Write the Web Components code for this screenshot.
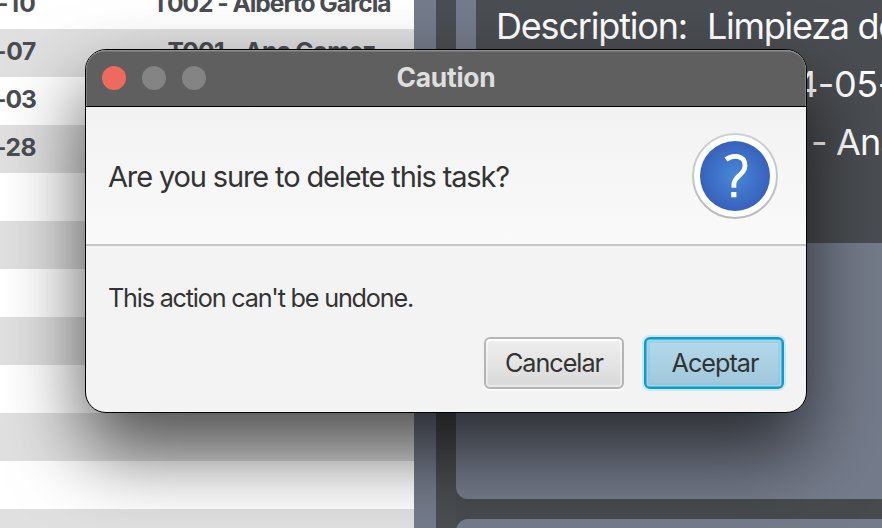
<!DOCTYPE html>
<html lang="en">
<head>
<meta charset="utf-8">
<title>Caution</title>
<style>
html,body{margin:0;width:882px;height:528px;overflow:hidden;background:#484b4e}
body{font-family:Inter,"Liberation Sans",sans-serif}
</style>
</head>
<body>
<task-app></task-app>
<script>
const define = (name, html, init) => customElements.define(name, class extends HTMLElement {
  constructor() {
    super();
    this.attachShadow({mode: 'open'}).innerHTML = html;
  }
  connectedCallback() { if (init) init(this, this.shadowRoot); }
});

// One line of text tracked to the width given in its "w" attribute.
define('fit-text', `<style>:host{display:inline-block;white-space:nowrap}span{display:inline-block}</style><span><slot></slot></span>`, (el, root) => {
  const want = parseFloat(el.getAttribute('w'));
  if (!want) return;
  const s = root.querySelector('span');
  const gap = (want - s.getBoundingClientRect().width) / el.textContent.length;
  s.style.letterSpacing = gap + 'px';
});

define('table-row', `<style>
:host{display:grid;grid-template-columns:130px 284px;height:48px;box-sizing:border-box;background:#fff;color:#4a4d52;font:700 24.6px/45px Inter,sans-serif}
:host([odd]){background:#e0e0e0}
.d{width:36px;display:flex;justify-content:flex-end}.n{text-align:center;margin-left:-1px}
</style><div class="d"><slot name="date"></slot></div><div class="n"><slot></slot></div>`);

define('task-table', `<style>:host{display:block;width:414px;height:528px;overflow:hidden}div{margin-top:-19px}</style>
<div>
<table-row><fit-text slot="date" w="39">-10</fit-text><fit-text w="238">T002 - Alberto Garcia</fit-text></table-row>
<table-row odd><fit-text slot="date" w="41">-07</fit-text><fit-text w="208">T001 - Ana Gomez</fit-text></table-row>
<table-row><fit-text slot="date" w="41">-03</fit-text></table-row>
<table-row odd><fit-text slot="date" w="41">-28</fit-text></table-row>
<table-row></table-row><table-row odd></table-row><table-row></table-row><table-row odd></table-row>
<table-row></table-row><table-row odd></table-row><table-row></table-row><table-row odd></table-row>
</div>`);

define('task-details', `<style>
:host{display:flex;flex-direction:column;gap:20px;width:426px;height:528px;overflow:hidden}
.card{background:#747b8a;border-radius:0 0 0 12px;height:499px;flex:none;padding-left:20px;box-sizing:border-box}
.info{background:#4a4d51;height:243px;color:#fff;font:400 36px/58px Inter,sans-serif;overflow:hidden;white-space:nowrap;box-sizing:border-box;padding-left:20px}
.line{display:flex;height:58px}.first{margin-top:-3px;gap:20px}.b{padding-left:299px}.c{padding-left:315px}
.next{background:#747b8a;border-radius:12px 0 0 0;height:60px;flex:none}
</style>
<div class="card"><div class="info">
<div class="line first"><fit-text w="191">Description:</fit-text><fit-text w="191">Limpieza de</fit-text></div>
<div class="line b"><fit-text w="99">4-05-</fit-text></div>
<div class="line c"><fit-text w="89">- Ana</fit-text></div>
</div></div><div class="next"></div>`);

define('question-icon', `<style>:host{display:block;width:86px;height:86px}svg{display:block}</style>
<svg width="86" height="86" viewBox="0 0 86 86">
<defs><radialGradient id="g"><stop offset="0" stop-color="#4788d8"/><stop offset="1" stop-color="#3861bc"/></radialGradient>
<linearGradient id="r" x2="0" y2="1"><stop offset="0" stop-color="#d0d0d0"/><stop offset="1" stop-color="#bababa"/></linearGradient></defs>
<circle cx="43" cy="43" r="42" fill="#fff" stroke="url(#r)" stroke-width="2"/>
<circle cx="43" cy="43" r="35" fill="url(#g)"/>
<path d="M34 26.5C40.5 21.5 53 22 53 32.4C53 42.2 41.9 42.6 41.9 51.5V54.8" fill="none" stroke="#fff" stroke-width="4.8"/>
<path d="M39.2 59h5.2v5.2h-5.2z" fill="#fff"/>
</svg>`);

define('dialog-button', `<style>
:host{display:flex;align-items:center;justify-content:center;box-sizing:border-box;width:140px;height:52px;border:2px solid #b5b5b5;border-radius:6px;background:linear-gradient(#efefef,#d9d9d9) padding-box;box-shadow:inset 0 0 0 2px rgba(255,255,255,.4),inset 0 2px #fff,0 2px #fcfcfc;color:#333;font:400 25.2px/48px Inter,sans-serif}
:host([primary]){padding-left:2px;border-color:#039ed3;background:linear-gradient(#b4dbec,#9fc6da) padding-box;box-shadow:0 0 0 2px #d1e6ee,inset 0 0 0 .5px #039ed3,inset 0 0 0 2px #a4d6e9,inset 0 0 0 4px rgba(146,196,217,.5)}
</style><slot></slot>`);

define('title-bar', `<style>
:host{display:grid;grid-template-columns:124px 1fr 124px;align-items:center;height:57px;box-sizing:border-box;background:#5f5f5f;border-bottom:1px solid #000;border-radius:19px 19px 0 0;box-shadow:inset 0 2px 0 -.5px #8d8d8d,inset 1px 0 #7c7c7c,inset -1px 0 #7c7c7c;color:#dedede;font:700 26.4px/52px Inter,sans-serif;text-align:center}
.dots{display:flex;gap:16px;padding-left:16px}.t{margin-top:-2px}
i{width:24px;height:24px;border-radius:50%;background:#848484}i:first-child{background:#ee6a5f}
</style><div class="dots"><i></i><i></i><i></i></div><div class="t"><slot></slot></div>`);

define('caution-dialog', `<style>
:host{display:block;width:722px;height:364px;box-sizing:border-box;border:1px solid #000;border-radius:21px;background:#f3f3f3;box-shadow:0 38px 78px rgba(0,0,0,.66);color:#333;overflow:hidden}
.head{height:139px;box-sizing:border-box;border-bottom:2px solid #c6c6c6;background:linear-gradient(#f2f2f2,#fafafa);display:flex;justify-content:space-between;padding:0 28px 0 22px;align-items:center;font:400 29px/40px Inter,sans-serif}
.head fit-text{margin-top:2px}
.body{height:91px;box-sizing:border-box;padding:32px 22px 0;font:400 25.2px/40px Inter,sans-serif}
.foot{display:flex;justify-content:flex-end;gap:20px;padding-right:22px}
</style>
<title-bar><fit-text w="99">Caution</fit-text></title-bar>
<div class="head"><fit-text w="401">Are you sure to delete this task?</fit-text><question-icon></question-icon></div>
<div class="body"><fit-text w="305">This action can't be undone.</fit-text></div>
<div class="foot"><dialog-button><fit-text w="98">Cancelar</fit-text></dialog-button><dialog-button primary><fit-text w="87">Aceptar</fit-text></dialog-button></div>`);

define('task-app', `<style>
:host{display:flex;position:relative;width:882px;height:528px;overflow:hidden}
.strip{width:22px;background:#747b8a}.gap{width:20px;background:#4a4d51}
caution-dialog{position:absolute;left:85px;top:49px}
</style><task-table></task-table><div class="strip"></div><div class="gap"></div><task-details></task-details><caution-dialog></caution-dialog>`);
</script>
</body>
</html>
